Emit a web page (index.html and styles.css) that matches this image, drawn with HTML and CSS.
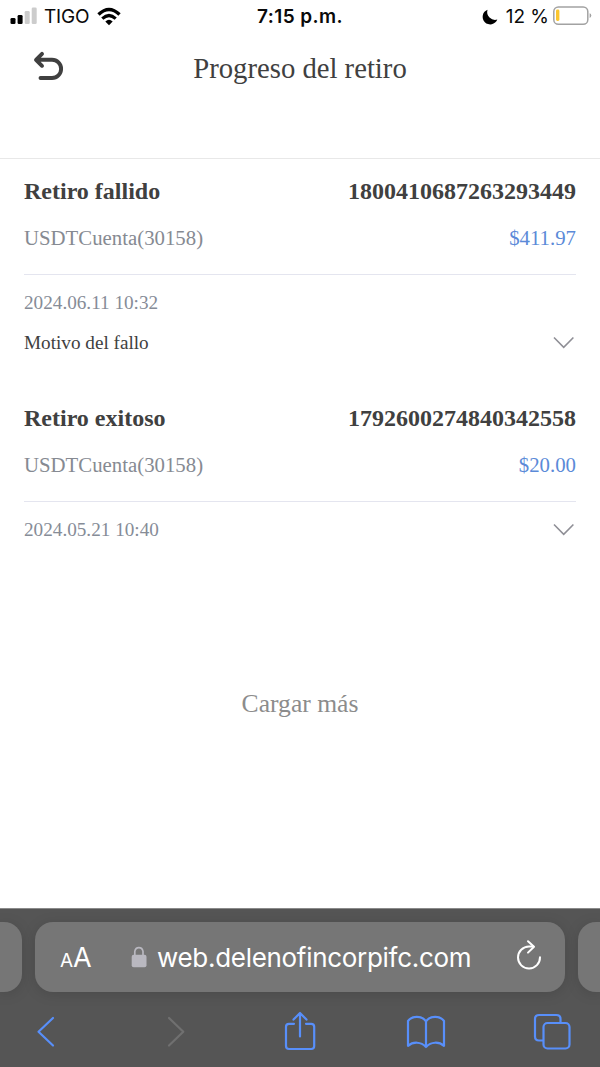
FILE: index.html
```html
<!DOCTYPE html>
<html lang="es">
<head>
<meta charset="utf-8">
<title>Progreso del retiro</title>
<link rel="stylesheet" href="styles.css">
</head>
<body>
<div class="screen">
  <div class="status">
    <div class="status-left">
      <svg class="signal" width="28" height="18" viewBox="0 0 28 18">
        <rect x="0.5" y="11" width="5" height="6" rx="1.3" fill="#000"/>
        <rect x="7.6" y="8" width="5" height="9" rx="1.3" fill="#000"/>
        <rect x="14.7" y="4" width="5" height="13" rx="1.3" fill="#ccc"/>
        <rect x="21.7" y="0.5" width="5" height="16.5" rx="1.3" fill="#ccc"/>
      </svg>
      <span class="carrier">TIGO</span>
      <svg class="wifi" width="24" height="18" viewBox="0 0 24 18">
        <path d="M1.5 6.5 Q12 -3.5 22.500 6.500" fill="none" stroke="#000" stroke-width="3.400"/>
        <path d="M5.300 10.600 Q12 4.400 18.700 10.600" fill="none" stroke="#000" stroke-width="3.200"/>
        <path d="M8.300 13.400 Q12 10.200 15.700 13.400 L12 17.200 Z" fill="#000"/>
      </svg>
    </div>
    <span class="clock">7:15 p.m.</span>
    <div class="status-right">
      <svg class="moon" width="16" height="16" viewBox="0 0 16 16">
        <path d="M5.500 0.700 A7.600 7.600 0 1 0 15.300 10.600 A8 8 0 0 1 5.500 0.700 Z" fill="#000"/>
      </svg>
      <span class="percent">12 %</span>
      <svg class="battery" width="39" height="20" viewBox="0 0 39 20">
        <rect x="0.800" y="0.900" width="34" height="17.400" rx="4.600" fill="#fff" stroke="#a2a2a2" stroke-width="1.500"/>
        <rect x="3" y="3.500" width="3.400" height="11.500" rx="1.400" fill="#fbc62f"/>
        <path d="M36.600 7.200 Q38.300 7.700 38.300 9.600 Q38.300 11.500 36.600 12 Z" fill="#a2a2a2"/>
      </svg>
    </div>
  </div>

  <header class="header">
    <svg class="undo" width="32" height="32" viewBox="0 0 32 32">
      <path d="M10 3.800 L4 9.800 L10 15.800 M4.500 9.800 H20 A9.100 9.100 0 0 1 20 28 H8.500" fill="none" stroke="#404040" stroke-width="3.900" stroke-linecap="round" stroke-linejoin="round"/>
    </svg>
    <h1 class="title">Progreso del retiro</h1>
  </header>

  <main class="list">
    <section class="card">
      <div class="row main-row"><span>Retiro fallido</span><span>1800410687263293449</span></div>
      <div class="row sub-row"><span>USDTCuenta(30158)</span><span class="amount">$411.97</span></div>
      <div class="row date-row"><span>2024.06.11 10:32</span></div>
      <div class="row reason-row"><span>Motivo del fallo</span>
        <svg class="chevron" width="22" height="14" viewBox="0 0 22 14"><path d="M1 1.500 L10.700 11.300 L20.400 1.500" fill="none" stroke="#8f8f96" stroke-width="1.600"/></svg>
      </div>
    </section>
    <section class="card">
      <div class="row main-row"><span>Retiro exitoso</span><span>1792600274840342558</span></div>
      <div class="row sub-row"><span>USDTCuenta(30158)</span><span class="amount">$20.00</span></div>
      <div class="row date-row"><span>2024.05.21 10:40</span>
        <svg class="chevron" width="22" height="14" viewBox="0 0 22 14"><path d="M1 1.500 L10.700 11.300 L20.400 1.500" fill="none" stroke="#8f8f96" stroke-width="1.600"/></svg>
      </div>
    </section>
    <div class="more">Cargar más</div>
  </main>

  <footer class="browser">
    <div class="tabs">
      <div class="tab-edge tab-prev"></div>
      <div class="address">
        <span class="text-size"><span class="small-a">A</span><span class="big-a">A</span></span>
        <svg class="lock" width="16" height="22" viewBox="0 0 16 22">
          <path d="M3.800 10 V5.300 A4.200 4.600 0 0 1 12 5.300 V10" fill="none" stroke="#b9b8c0" stroke-width="1.700"/>
          <rect x="0.700" y="8.800" width="14.800" height="12.400" rx="2" fill="#b9b8c0"/>
        </svg>
        <span class="url">web.delenofincorpifc.com</span>
        <svg class="reload" width="26" height="30" viewBox="0 0 26 30">
          <path d="M17.300 6.500 H13 A11 11 0 1 0 24 17.300" fill="none" stroke="#fff" stroke-width="2" stroke-linecap="round"/>
          <path d="M12 1.200 L18 6.800 L12 12.600" fill="none" stroke="#fff" stroke-width="2" stroke-linecap="round" stroke-linejoin="round"/>
        </svg>
      </div>
      <div class="tab-edge tab-next"></div>
    </div>
    <nav class="toolbar">
      <svg width="40" height="40" viewBox="0 0 40 40"><path d="M27 7 L12.500 20.800 L27 34.500" class="line"/></svg>
      <svg width="40" height="40" viewBox="0 0 40 40"><path d="M17 7 L31.300 20.800 L17 34.500" class="line disabled"/></svg>
      <svg width="40" height="40" viewBox="0 0 40 40"><path d="M16 12.800 H11 Q8 12.800 8 15.800 V35 Q8 38 11 38 H33.200 Q36.200 38 36.200 35 V15.800 Q36.200 12.800 33.200 12.800 H28 M22 25.500 V2.500 M15.500 8.600 L22 2 L28.500 8.600" class="line"/></svg>
      <svg width="40" height="40" viewBox="0 0 40 40"><path d="M22 10.500 C18 4.500 8 4.500 4 10 V34.800 C9 30.500 17 30.500 22 36 C27 30.500 35 30.500 40 34.800 V10 C36 4.500 26 4.500 22 10.500 V36" class="line"/></svg>
      <svg width="41" height="40" viewBox="0 0 41 40"><path d="M13 29.500 H9 Q5 29.500 5 25.500 V8 Q5 4 9 4 H26.500 Q30.500 4 30.500 8 V12" class="line"/><rect x="13.500" y="12" width="26" height="25.500" rx="4" class="line"/></svg>
    </nav>
  </footer>
</div>
</body>
</html>
```
FILE: styles.css
```css
* { box-sizing: border-box; }
body {
  margin: 0;
  background: #fff;
  font-family: "Liberation Serif", "Times New Roman", serif;
}
svg { display: block; flex: none; overflow: visible; }
.screen {
  width: 600px;
  height: 1067px;
  display: flex;
  flex-direction: column;
  overflow: hidden;
}

.status {
  height: 33px;
  flex: none;
  padding: 0 8px 0 10px;
  display: grid;
  grid-template-columns: 1fr auto 1fr;
  align-items: center;
  font-family: Inter, sans-serif;
  font-size: 19px;
  line-height: 33px;
  color: #0a0a0a;
}
.status-left, .status-right { display: flex; align-items: center; }
.status-left { gap: 6px; }
.status-right { justify-content: flex-end; }
.signal { margin-bottom: 2px; }
.carrier { width: 46px; letter-spacing: -0.2px; }
.wifi { margin-left: 1px; }
.clock { font-weight: 600; letter-spacing: 0.4px; margin-right: 2px; }
.moon { margin-right: 8px; }
.percent { margin-right: 4px; white-space: nowrap; }
.battery { margin-bottom: 1px; }

.header {
  height: 126px;
  flex: none;
  padding: 0 32px 56px;
  display: grid;
  grid-template-columns: 32px 1fr 32px;
  align-items: center;
  border-bottom: 1px solid #e8e8e8;
}
.undo { margin-top: -4px; }
.title {
  margin: 0;
  text-align: center;
  font-size: 28.7px;
  font-weight: 400;
  line-height: 40px;
  color: #404040;
}

.list { flex: 1; padding: 8px 24px 0; }
.card { height: 227px; }
.row { display: flex; justify-content: space-between; align-items: center; }
.main-row { height: 48px; font-size: 24px; font-weight: 700; color: #404040; }
.sub-row {
  height: 60px;
  padding-bottom: 14px;
  font-size: 20.8px;
  color: #868a92;
  border-bottom: 1px solid #e4e5ef;
}
.amount { color: #5b8ad8; }
.date-row { height: 40px; margin-top: 8px; font-size: 19.2px; color: #868c97; }
.reason-row { height: 40px; font-size: 19.2px; color: #404040; }
.chevron { margin-right: 1px; }
.more {
  margin-top: 63px;
  line-height: 40px;
  text-align: center;
  font-size: 25.6px;
  color: #8c8c8c;
}

.browser {
  height: 159px;
  flex: none;
  background: #555;
  border-top: 1px solid #8a8a8a;
  font-family: Inter, sans-serif;
}
.tabs {
  display: grid;
  grid-template-columns: 22px 530px 22px;
  gap: 13px;
  height: 83px;
  padding: 13px 0 0;
}
.tab-edge, .address {
  height: 70px;
  background: #767676;
  box-shadow: 0 2px 14px rgba(0, 0, 0, 0.13);
}
.tab-prev { border-radius: 0 18px 18px 0; }
.tab-next { border-radius: 18px 0 0 18px; }
.address {
  display: flex;
  align-items: center;
  padding: 0 23px 0 25px;
  border-radius: 18px;
  color: #fff;
}
.text-size { width: 71px; display: flex; align-items: baseline; }
.small-a { font-size: 19px; }
.big-a { font-size: 27px; }
.url { width: 314px; margin-left: 10px; font-size: 26px; letter-spacing: -0.3px; white-space: nowrap; }
.reload { margin: 0 0 5px auto; }
.toolbar { display: flex; gap: 86px; padding: 19px 0 0 26px; }
.line { fill: none; stroke: #588ffa; stroke-width: 2.200; stroke-linecap: round; stroke-linejoin: round; }
.disabled { stroke: #707070; }
```
